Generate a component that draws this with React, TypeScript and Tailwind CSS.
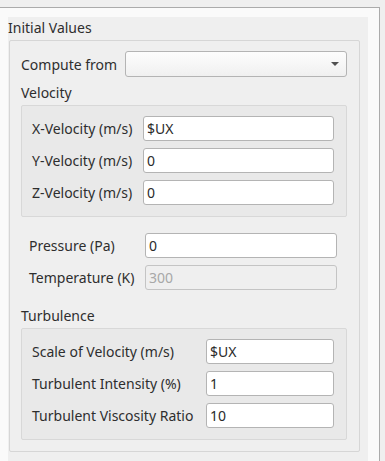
import React from "react";

function Field({
  value,
  width,
  disabled = false,
}: {
  value: string;
  width: string;
  disabled?: boolean;
}) {
  return (
    <div
      className={`${width} h-[25px] rounded-[3px] border px-[3px] leading-[23px] ${
        disabled
          ? "border-[#c4c4c4] bg-[#efefef] text-[#a8a8a8]"
          : "border-[#b4b4b4] bg-white text-[#2a2a2a]"
      }`}
    >
      {value}
    </div>
  );
}

function Row({
  label,
  value,
  labelW,
  fieldW,
  disabled,
}: {
  label: string;
  value: string;
  labelW: string;
  fieldW: string;
  disabled?: boolean;
}) {
  return (
    <div className="flex items-center">
      <div className={`${labelW} shrink-0 whitespace-nowrap`}>{label}</div>
      <Field value={value} width={fieldW} disabled={disabled} />
    </div>
  );
}

export default function App() {
  const velocity = [
    { label: "X-Velocity (m/s)", value: "$UX" },
    { label: "Y-Velocity (m/s)", value: "0" },
    { label: "Z-Velocity (m/s)", value: "0" },
  ];
  const turbulence = [
    { label: "Scale of Velocity (m/s)", value: "$UX" },
    { label: "Turbulent Intensity (%)", value: "1" },
    { label: "Turbulent Viscosity Ratio", value: "10" },
  ];

  return (
    <div
      className="h-[461px] w-[385px] overflow-hidden bg-[#efefef] pt-[7px] text-[14px] text-[#2e2e2e]"
      style={{ fontFamily: '"Noto Sans", "DejaVu Sans", sans-serif' }}
    >
      <div className="h-[454px] w-[380px] border-r border-t border-[#ababab] bg-[#fafafa] pl-[8px] pt-[9px]">
        <div className="h-full w-[360px] bg-[#efefef]">
          <div className="h-[23px] leading-[22px]">Initial Values</div>

          {/* Group box */}
          <div className="ml-[1px] w-[351px] rounded-[2px] border border-[#d6d6d6] pb-[11px] pl-[11px] pr-[12px] pt-[10px]">
            <div className="flex items-center">
              <div className="w-[104px] shrink-0">Compute from</div>
              <div className="relative h-[26px] w-[222px] rounded-[3px] border border-[#b4b4b4] bg-gradient-to-b from-[#fdfdfd] to-[#f0f0f0]">
                <svg
                  className="absolute right-[7px] top-[10px]"
                  width="8"
                  height="4"
                  viewBox="0 0 8 4"
                >
                  <path d="M0 0H8L4 4Z" fill="#505050" />
                </svg>
              </div>
            </div>

            <div className="mt-[6px] h-[20px] leading-[20px]">Velocity</div>
            <div className="mt-[2px] flex w-[326px] flex-col gap-[7px] rounded-[2px] border border-[#d8d8d8] bg-[#e9e9e9] pb-[11px] pl-[10px] pr-[12px] pt-[10px]">
              {velocity.map((r) => (
                <Row
                  key={r.label}
                  label={r.label}
                  value={r.value}
                  labelW="w-[111px]"
                  fieldW="w-[191px]"
                />
              ))}
            </div>

            <div className="mt-[16px] flex flex-col gap-[7px] pl-[8px]">
              <Row label="Pressure (Pa)" value="0" labelW="w-[116px]" fieldW="w-[192px]" />
              <Row
                label="Temperature (K)"
                value="300"
                labelW="w-[116px]"
                fieldW="w-[192px]"
                disabled
              />
            </div>

            <div className="mt-[16px] h-[20px] leading-[20px]">Turbulence</div>
            <div className="mt-[2px] flex w-[326px] flex-col gap-[7px] rounded-[2px] border border-[#d8d8d8] bg-[#e9e9e9] pb-[11px] pl-[10px] pr-[12px] pt-[10px]">
              {turbulence.map((r) => (
                <Row
                  key={r.label}
                  label={r.label}
                  value={r.value}
                  labelW="w-[174px]"
                  fieldW="w-[128px]"
                />
              ))}
            </div>
          </div>
        </div>
      </div>
    </div>
  );
}
